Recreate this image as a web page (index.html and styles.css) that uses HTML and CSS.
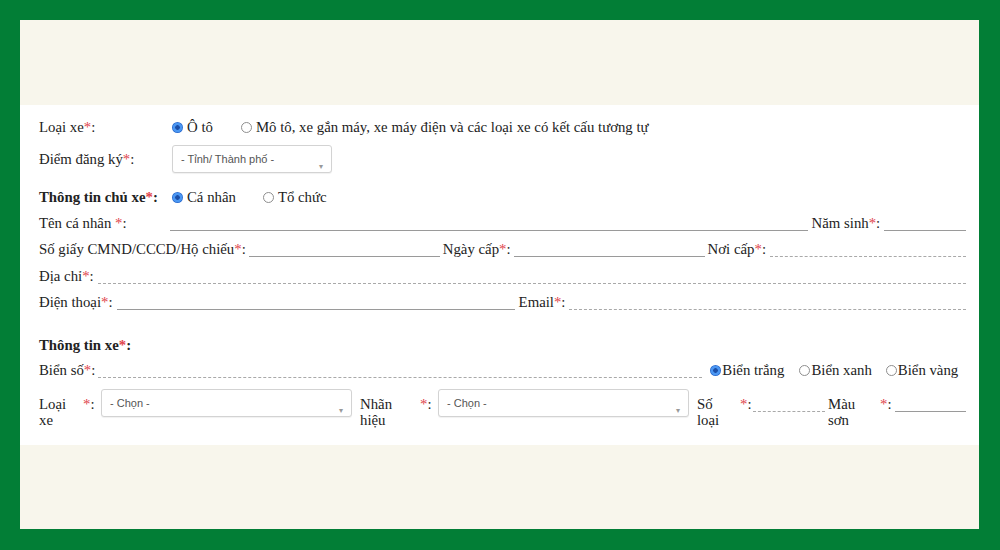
FILE: index.html
```html
<!DOCTYPE html>
<html lang="vi">
<head>
<meta charset="utf-8">
<link rel="stylesheet" href="styles.css">
</head>
<body>
<div class="frame">
  <div class="band top"></div>
  <div class="form">
    <div class="row r1">
      <span class="lbl w133">Loại xe<span class="req">*</span>:</span>
      <span class="radio on"></span><span class="opt">Ô tô</span>
      <span class="radio off gap1"></span><span class="opt">Mô tô, xe gắn máy, xe máy điện và các loại xe có kết cấu tương tự</span>
    </div>
    <div class="row r2">
      <span class="lbl w133">Điểm đăng ký<span class="req">*</span>:</span>
      <div class="select s-city"><span class="ph">- Tỉnh/ Thành phố -</span><span class="caret">▾</span></div>
    </div>
    <div class="row r3">
      <span class="lbl w133 b">Thông tin chủ xe<span class="req">*</span>:</span>
      <span class="radio on"></span><span class="opt">Cá nhân</span>
      <span class="radio off gap2"></span><span class="opt">Tổ chức</span>
    </div>
    <div class="row r4">
      <span class="lbl">Tên cá nhân <span class="req">*</span>:</span>
      <span class="line solid l-name"></span>
      <span class="lbl">Năm sinh<span class="req">*</span>:</span>
      <span class="line solid grow"></span>
    </div>
    <div class="row r5">
      <span class="lbl">Số giấy CMND/CCCD/Hộ chiếu<span class="req">*</span>:</span>
      <span class="line solid l-id"></span>
      <span class="lbl">Ngày cấp<span class="req">*</span>:</span>
      <span class="line solid l-date"></span>
      <span class="lbl">Nơi cấp<span class="req">*</span>:</span>
      <span class="line dash grow"></span>
    </div>
    <div class="row r6">
      <span class="lbl">Địa chỉ<span class="req">*</span>:</span>
      <span class="line dash grow"></span>
    </div>
    <div class="row r7">
      <span class="lbl">Điện thoại<span class="req">*</span>:</span>
      <span class="line solid l-phone"></span>
      <span class="lbl">Email<span class="req">*</span>:</span>
      <span class="line dash grow"></span>
    </div>
    <div class="row r8">
      <span class="lbl b">Thông tin xe<span class="req">*</span>:</span>
    </div>
    <div class="row r9">
      <span class="lbl">Biển số<span class="req">*</span>:</span>
      <span class="line dash l-plate"></span>
      <span class="radio on"></span><span class="opt">Biển trắng</span>
      <span class="radio off g3"></span><span class="opt">Biển xanh</span>
      <span class="radio off g4"></span><span class="opt">Biển vàng</span>
    </div>
    <div class="row r10">
      <span class="wl w-loai">Loại xe</span><span class="st st1"><span class="req">*</span>:</span>
      <div class="select s-wide"><span class="ph">- Chọn -</span><span class="caret">▾</span></div>
      <span class="wl w-nhan">Nhãn hiệu</span><span class="st st2"><span class="req">*</span>:</span>
      <div class="select s-wide"><span class="ph">- Chọn -</span><span class="caret">▾</span></div>
      <span class="wl w-so">Số loại</span><span class="st st3"><span class="req">*</span>:</span>
      <span class="line dash l-so"></span>
      <span class="wl w-mau">Màu sơn</span><span class="st st4"><span class="req">*</span>:</span>
      <span class="line solid l-mau"></span>
    </div>
  </div>
  <div class="band bottom"></div>
</div>
</body>
</html>
```

FILE: styles.css
```css
* { box-sizing: border-box; }
html, body { margin: 0; padding: 0; }
body {
  background: #027e36;
  width: 1000px;
  height: 550px;
  overflow: hidden;
  font-family: "Liberation Serif", "Times New Roman", serif;
  font-size: 14.8px;
  color: #222;
}
.frame {
  margin: 20px 0 0 20px;
  width: 959px;
  height: 509px;
  display: flex;
  flex-direction: column;
}
.band { background: #f8f6ec; }
.band.top { height: 85px; }
.band.bottom { flex: 1; }
.form {
  background: #fff;
  height: 340px;
  padding: 12px 13px 0 19px;
  display: flex;
  flex-direction: column;
}
.row {
  display: flex;
  align-items: center;
  height: 20px;
  line-height: 20px;
  white-space: nowrap;
}
.lbl { flex: none; }
.w133 { width: 133px; }
.b { font-weight: bold; }
.req { color: #e0434b; }
.r2 { margin-top: 8px; height: 28px; }
.r3 { margin-top: 14px; }
.r4 { margin-top: 6px; }
.r5 { margin-top: 6px; }
.r6 { margin-top: 7px; }
.r7 { margin-top: 6px; }
.r8 { margin-top: 23px; }
.r9 { margin-top: 5px; }
.r10 { margin-top: 9px; height: 40px; align-items: flex-start; }

.radio {
  flex: none;
  width: 11px;
  height: 11px;
  border-radius: 50%;
  margin-right: 4px;
}
.radio.off { border: 1px solid #8e8e8e; background: #fff; }
.radio.on {
  background: radial-gradient(circle, #1b4fa8 0 2px, #4a96f2 2.6px 4.4px, #2d6fd2 5px);
}
.gap1 { margin-left: 28px; }
.gap2 { margin-left: 27px; }
.opt { flex: none; }
.r9 .radio { margin-right: 1px; }
.r9 .radio.on { margin-left: 8px; }
.g3 { margin-left: 15px; }
.g4 { margin-left: 14px; }

.select {
  position: relative;
  flex: none;
  height: 28px;
  border: 1px solid #d3d3d3;
  border-radius: 3px;
  box-shadow: 0 1px 1px rgba(0,0,0,0.06);
  background: #fff;
  font-family: "Liberation Sans", Arial, sans-serif;
  font-size: 11px;
  color: #555;
  padding-left: 8px;
  line-height: 26px;
}
.s-city { width: 160px; }
.s-wide { width: 251px; }
.caret {
  position: absolute;
  right: 8px;
  bottom: 1px;
  font-size: 8px;
  line-height: 8px;
  color: #999;
}

.line {
  flex: none;
  align-self: flex-end;
  height: 0;
  margin-bottom: 2px;
  border-bottom: 1px solid #9a9a9a;
}
.line.dash { border-bottom: 1px dashed #a9a9a9; }
.grow { flex: 1; margin-left: 4px; }
.l-name { width: 638px; margin: 0 4px 2px 43px; }
.l-id { width: 191px; margin: 0 3px 2px 3px; }
.l-date { width: 191px; margin: 0 3px 2px 3px; }
.l-phone { width: 398px; margin: 0 4px 2px 4px; }
.l-plate { width: 604px; margin-left: 3px; }

.wl {
  flex: none;
  white-space: normal;
  line-height: 16px;
  padding-top: 7px;
}
.st { flex: none; line-height: 16px; padding-top: 7px; }
.w-loai { width: 44px; padding-right: 10px; }
.st1 { width: 18px; }
.w-nhan { width: 60px; margin-left: 8px; padding-right: 20px; }
.st2 { width: 18px; }
.w-so { width: 43px; margin-left: 8px; padding-right: 10px; }
.st3 { width: 13px; }
.l-so { width: 72px; align-self: flex-start; margin-top: 22px; }
.w-mau { width: 52px; margin-left: 3px; padding-right: 14px; }
.st4 { width: 15px; }
.l-mau { flex: 1; align-self: flex-start; margin-top: 22px; }
```
